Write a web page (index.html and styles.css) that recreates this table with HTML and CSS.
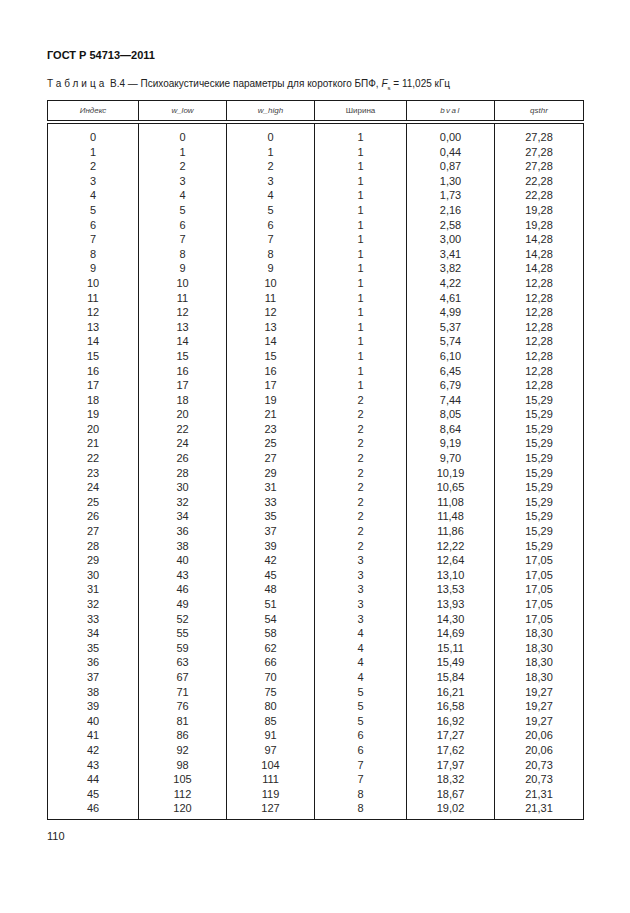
FILE: index.html
```html
<!DOCTYPE html>
<html lang="ru">
<head>
<meta charset="utf-8">
<link rel="stylesheet" href="styles.css">
</head>
<body>
<div class="page">
  <div class="doc-title">ГОСТ Р 54713—2011</div>
  <div class="caption"><span class="spaced">Таблица</span> В.4 — Психоакустические параметры для короткого БПФ, <i>F</i><sub>s</sub> = 11,025 кГц</div>
  <table class="data">
    <colgroup>
      <col class="c1"><col class="c2"><col class="c3"><col class="c4"><col class="c5"><col class="c6">
    </colgroup>
    <thead>
      <tr>
        <th><i>Индекс</i></th>
        <th><i>w_low</i></th>
        <th><i>w_high</i></th>
        <th>Ширина</th>
        <th><i class="wide">bval</i></th>
        <th><i>qsthr</i></th>
      </tr>
    </thead>
    <tbody id="rows">
<tr><td>0</td><td>0</td><td>0</td><td>1</td><td>0,00</td><td>27,28</td></tr>
<tr><td>1</td><td>1</td><td>1</td><td>1</td><td>0,44</td><td>27,28</td></tr>
<tr><td>2</td><td>2</td><td>2</td><td>1</td><td>0,87</td><td>27,28</td></tr>
<tr><td>3</td><td>3</td><td>3</td><td>1</td><td>1,30</td><td>22,28</td></tr>
<tr><td>4</td><td>4</td><td>4</td><td>1</td><td>1,73</td><td>22,28</td></tr>
<tr><td>5</td><td>5</td><td>5</td><td>1</td><td>2,16</td><td>19,28</td></tr>
<tr><td>6</td><td>6</td><td>6</td><td>1</td><td>2,58</td><td>19,28</td></tr>
<tr><td>7</td><td>7</td><td>7</td><td>1</td><td>3,00</td><td>14,28</td></tr>
<tr><td>8</td><td>8</td><td>8</td><td>1</td><td>3,41</td><td>14,28</td></tr>
<tr><td>9</td><td>9</td><td>9</td><td>1</td><td>3,82</td><td>14,28</td></tr>
<tr><td>10</td><td>10</td><td>10</td><td>1</td><td>4,22</td><td>12,28</td></tr>
<tr><td>11</td><td>11</td><td>11</td><td>1</td><td>4,61</td><td>12,28</td></tr>
<tr><td>12</td><td>12</td><td>12</td><td>1</td><td>4,99</td><td>12,28</td></tr>
<tr><td>13</td><td>13</td><td>13</td><td>1</td><td>5,37</td><td>12,28</td></tr>
<tr><td>14</td><td>14</td><td>14</td><td>1</td><td>5,74</td><td>12,28</td></tr>
<tr><td>15</td><td>15</td><td>15</td><td>1</td><td>6,10</td><td>12,28</td></tr>
<tr><td>16</td><td>16</td><td>16</td><td>1</td><td>6,45</td><td>12,28</td></tr>
<tr><td>17</td><td>17</td><td>17</td><td>1</td><td>6,79</td><td>12,28</td></tr>
<tr><td>18</td><td>18</td><td>19</td><td>2</td><td>7,44</td><td>15,29</td></tr>
<tr><td>19</td><td>20</td><td>21</td><td>2</td><td>8,05</td><td>15,29</td></tr>
<tr><td>20</td><td>22</td><td>23</td><td>2</td><td>8,64</td><td>15,29</td></tr>
<tr><td>21</td><td>24</td><td>25</td><td>2</td><td>9,19</td><td>15,29</td></tr>
<tr><td>22</td><td>26</td><td>27</td><td>2</td><td>9,70</td><td>15,29</td></tr>
<tr><td>23</td><td>28</td><td>29</td><td>2</td><td>10,19</td><td>15,29</td></tr>
<tr><td>24</td><td>30</td><td>31</td><td>2</td><td>10,65</td><td>15,29</td></tr>
<tr><td>25</td><td>32</td><td>33</td><td>2</td><td>11,08</td><td>15,29</td></tr>
<tr><td>26</td><td>34</td><td>35</td><td>2</td><td>11,48</td><td>15,29</td></tr>
<tr><td>27</td><td>36</td><td>37</td><td>2</td><td>11,86</td><td>15,29</td></tr>
<tr><td>28</td><td>38</td><td>39</td><td>2</td><td>12,22</td><td>15,29</td></tr>
<tr><td>29</td><td>40</td><td>42</td><td>3</td><td>12,64</td><td>17,05</td></tr>
<tr><td>30</td><td>43</td><td>45</td><td>3</td><td>13,10</td><td>17,05</td></tr>
<tr><td>31</td><td>46</td><td>48</td><td>3</td><td>13,53</td><td>17,05</td></tr>
<tr><td>32</td><td>49</td><td>51</td><td>3</td><td>13,93</td><td>17,05</td></tr>
<tr><td>33</td><td>52</td><td>54</td><td>3</td><td>14,30</td><td>17,05</td></tr>
<tr><td>34</td><td>55</td><td>58</td><td>4</td><td>14,69</td><td>18,30</td></tr>
<tr><td>35</td><td>59</td><td>62</td><td>4</td><td>15,11</td><td>18,30</td></tr>
<tr><td>36</td><td>63</td><td>66</td><td>4</td><td>15,49</td><td>18,30</td></tr>
<tr><td>37</td><td>67</td><td>70</td><td>4</td><td>15,84</td><td>18,30</td></tr>
<tr><td>38</td><td>71</td><td>75</td><td>5</td><td>16,21</td><td>19,27</td></tr>
<tr><td>39</td><td>76</td><td>80</td><td>5</td><td>16,58</td><td>19,27</td></tr>
<tr><td>40</td><td>81</td><td>85</td><td>5</td><td>16,92</td><td>19,27</td></tr>
<tr><td>41</td><td>86</td><td>91</td><td>6</td><td>17,27</td><td>20,06</td></tr>
<tr><td>42</td><td>92</td><td>97</td><td>6</td><td>17,62</td><td>20,06</td></tr>
<tr><td>43</td><td>98</td><td>104</td><td>7</td><td>17,97</td><td>20,73</td></tr>
<tr><td>44</td><td>105</td><td>111</td><td>7</td><td>18,32</td><td>20,73</td></tr>
<tr><td>45</td><td>112</td><td>119</td><td>8</td><td>18,67</td><td>21,31</td></tr>
<tr><td>46</td><td>120</td><td>127</td><td>8</td><td>19,02</td><td>21,31</td></tr>
    </tbody>
  </table>
  <div class="page-num">110</div>
</div>
</body>
</html>
```

FILE: styles.css
```css
html, body {
  margin: 0;
  padding: 0;
  background: #ffffff;
}
body {
  font-family: "Liberation Sans", Arial, sans-serif;
  color: #222;
}
.page {
  padding: 48px 0 0 47px;
  width: 537px;
}
.doc-title {
  font-weight: bold;
  font-size: 11px;
  line-height: 14px;
  color: #111;
}
.caption {
  margin-top: 15px;
  font-size: 10px;
  line-height: 14px;
  color: #222;
}
.caption .spaced {
  letter-spacing: 3px;
}
.caption sub {
  font-size: 6px;
  line-height: 0;
}
.data {
  margin-top: 9px;
  border-collapse: collapse;
  width: 537px;
  table-layout: fixed;
  border: 1px solid #1a1a1a;
}
.c1 { width: 91px; }
.c2 { width: 88px; }
.c3 { width: 88px; }
.c4 { width: 92px; }
.c5 { width: 88px; }
.c6 { width: 89px; }
.data th {
  height: 19px;
  padding: 0;
  font-weight: normal;
  font-size: 8px;
  color: #444;
  border-left: 1px solid #1a1a1a;
  border-right: 1px solid #1a1a1a;
  border-bottom: 4px double #1a1a1a;
  text-align: center;
  vertical-align: middle;
}
.data th .wide {
  letter-spacing: 1.5px;
}
.data td {
  padding: 0;
  font-size: 11px;
  line-height: 14.6px;
  height: 14.6px;
  text-align: center;
  border-left: 1px solid #1a1a1a;
  border-right: 1px solid #1a1a1a;
  color: #2a2a2a;
}
.data tbody tr:first-child td {
  padding-top: 6px;
}
.data tbody tr:last-child td {
  padding-bottom: 3px;
}
.page-num {
  margin-top: 9px;
  font-size: 11px;
  line-height: 14px;
  color: #222;
}
```
